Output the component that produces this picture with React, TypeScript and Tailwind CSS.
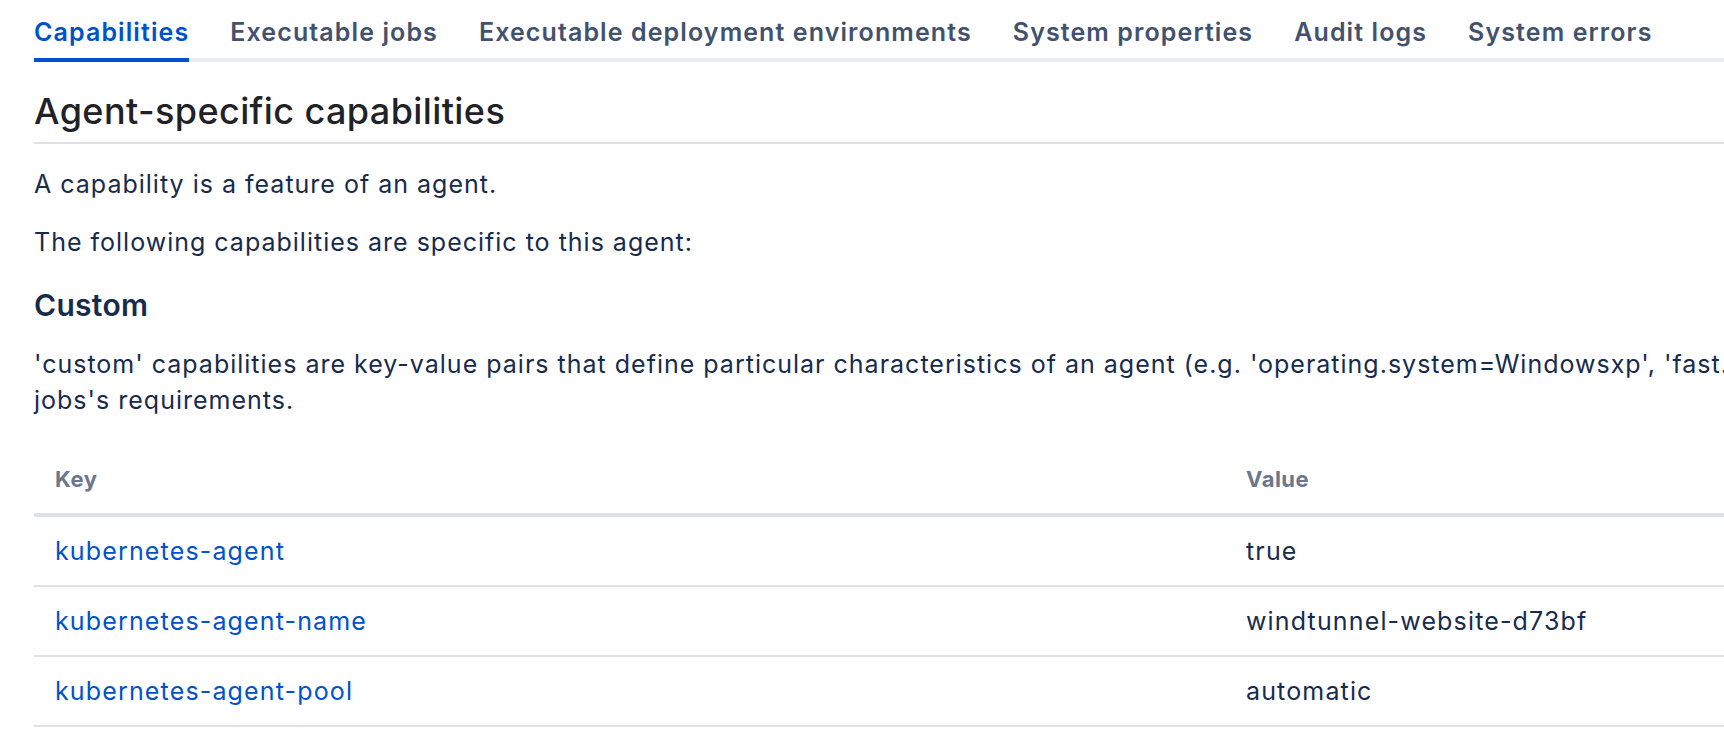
import React from "react";

const tabs = [
  "Capabilities",
  "Executable jobs",
  "Executable deployment environments",
  "System properties",
  "Audit logs",
  "System errors",
];

const rows = [
  { key: "kubernetes-agent", value: "true" },
  { key: "kubernetes-agent-name", value: "windtunnel-website-d73bf" },
  { key: "kubernetes-agent-pool", value: "automatic" },
];

export default function App() {
  return (
    <div
      className="w-[1724px] h-[744px] overflow-hidden bg-white"
      style={{ fontFamily: "Inter, 'Noto Sans', sans-serif" }}
    >
      <div className="w-[2600px] pl-[34px] pt-[14px]">
        {/* Tabs */}
        <div className="flex gap-[41px] border-b-4 border-[#ebecf0]">
          {tabs.map((t, i) => (
            <div
              key={t}
              className={
                i === 0
                  ? "pb-[8px] -mb-[4px] border-b-4 border-[#0052cc] text-[#0052cc] text-[25px] leading-[36px] font-semibold tracking-[1.1px]"
                  : "pb-[8px] -mb-[4px] border-b-4 border-transparent text-[#42526e] text-[25px] leading-[36px] font-semibold tracking-[1.1px]"
              }
            >
              {t}
            </div>
          ))}
        </div>

        {/* Heading */}
        <h2 className="mt-[28px] pb-[9px] border-b-2 border-[#dfe1e6] text-[36px] leading-[43px] font-medium tracking-[0.4px] text-[#1f2328]">
          Agent-specific capabilities
        </h2>

        <p className="mt-[22px] text-[25px] leading-[36px] tracking-[1px] text-[#172b4d]">
          A capability is a feature of an agent.
        </p>
        <p className="mt-[22px] text-[25px] leading-[36px] tracking-[1px] text-[#172b4d]">
          The following capabilities are specific to this agent:
        </p>

        <h3 className="mt-[27px] text-[30px] leading-[36px] font-semibold tracking-[0.3px] text-[#172b4d]">
          Custom
        </h3>

        <p className="mt-[23px] text-[25px] leading-[36px] tracking-[1px] text-[#172b4d]">
          <span className="whitespace-nowrap">
            'custom' capabilities are key-value pairs that define particular characteristics of an agent (e.g.
            'operating.system=Windowsxp', 'fast.network=true'). They are used to match agents with
          </span>
          <br />
          jobs's requirements.
        </p>

        {/* Table */}
        <div className="mt-[27px]">
          <div className="grid grid-cols-[1191px_1fr] border-b-4 border-[#dfe1e6]">
            <div className="pl-[21px] pt-[18px] pb-[18px] text-[22px] leading-[32px] font-bold tracking-[0.5px] text-[#6b778c]">
              Key
            </div>
            <div className="pl-[21px] pt-[18px] pb-[18px] text-[22px] leading-[32px] font-bold tracking-[0.5px] text-[#6b778c]">
              Value
            </div>
          </div>
          {rows.map((r) => (
            <div
              key={r.key}
              className="grid grid-cols-[1191px_1fr] border-b-2 border-[#dfe1e6]"
            >
              <div className="pl-[21px] py-[16px] text-[25px] leading-[36px] tracking-[1.15px] text-[#0052cc]">
                {r.key}
              </div>
              <div className="pl-[21px] py-[16px] text-[25px] leading-[36px] tracking-[1.15px] text-[#172b4d]">
                {r.value}
              </div>
            </div>
          ))}
        </div>
      </div>
    </div>
  );
}
